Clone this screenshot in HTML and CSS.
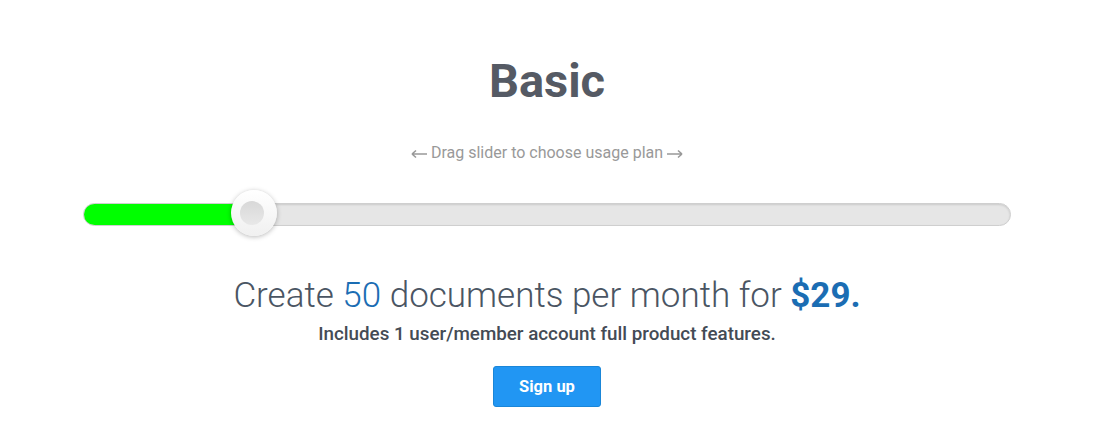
FILE: index.html
```html
<!DOCTYPE html>
<html lang="en">
<head>
    <meta charset="UTF-8">
    <title>Usage Plan</title>
    <link rel="stylesheet" href="styles.css">
</head>
<body>

<div class="plan">
    <h1 class="plan-name">Basic</h1>
    <p class="hint">
        <svg class="arrow" width="16" height="10" viewBox="0 0 16 10"><path d="M1 5H16M1 5L5 1.5M1 5L5 8.5" fill="none" stroke="#999" stroke-width="1.6"/></svg>
        Drag slider to choose usage plan
        <svg class="arrow" width="16" height="10" viewBox="0 0 16 10"><path d="M0 5H15M15 5L11 1.5M15 5L11 8.5" fill="none" stroke="#999" stroke-width="1.6"/></svg>
    </p>

    <div class="slider">
        <div class="slider-track">
            <div class="slider-fill"></div>
        </div>
        <div class="slider-thumb"><span class="thumb-dot"></span></div>
    </div>

    <p class="headline">Create <span class="count">50</span> documents per month for <strong class="price">$29.</strong></p>
    <p class="details">Includes 1 user/member account full product features.</p>

    <button class="signup">Sign up</button>
</div>

</body>
</html>
```

FILE: styles.css
```css
body {
    margin: 0;
    font-family: Roboto, 'Liberation Sans', sans-serif;
    background-color: #fff;
}
.plan {
    display: flex;
    flex-direction: column;
    align-items: center;
    padding-top: 52px;
    padding-right: 14px;
}
.plan-name {
    margin: 0;
    font-size: 47px;
    font-weight: 700;
    color: #555a64;
    line-height: 58px;
}
.hint {
    display: flex;
    align-items: center;
    gap: 4px;
    margin: 33px 0 0;
    font-size: 16px;
    color: #999;
    line-height: 20px;
}
.arrow {
    margin-top: 1px;
}
.slider {
    position: relative;
    width: 928px;
    height: 48px;
    margin-top: 27px;
    display: flex;
    align-items: center;
}
.slider-track {
    width: 100%;
    height: 23px;
    border-radius: 12px;
    background-color: #e6e6e6;
    border: 1px solid #cfcfcf;
    box-sizing: border-box;
    box-shadow: inset 0 1px 2px rgba(0, 0, 0, 0.12);
    overflow: hidden;
}
.slider-fill {
    width: 170px;
    height: 100%;
    background-color: #00ff00;
}
.slider-thumb {
    position: absolute;
    left: 148px;
    top: 0;
    width: 46px;
    height: 46px;
    border-radius: 50%;
    background: linear-gradient(#ffffff, #f0f0f0);
    box-shadow: 0 1px 5px rgba(0, 0, 0, 0.28);
    display: flex;
    justify-content: center;
    align-items: center;
}
.thumb-dot {
    width: 24px;
    height: 24px;
    margin-left: -4px;
    border-radius: 50%;
    background: linear-gradient(#d8d8d8, #e8e8e8);
}
.headline {
    margin: 37px 0 0;
    font-size: 35px;
    font-weight: 300;
    color: #4a5563;
    line-height: 42px;
}
.count {
    color: #1b6db3;
}
.price {
    font-weight: 700;
    color: #1b6db3;
}
.details {
    margin: 5px 0 0;
    font-size: 18.8px;
    font-weight: 500;
    color: #444b55;
    line-height: 24px;
}
.signup {
    margin-top: 20px;
    width: 108px;
    height: 41px;
    border: 1px solid #1a86d8;
    border-radius: 3px;
    background-color: #2196f3;
    color: #fff;
    font-family: Roboto, 'Liberation Sans', sans-serif;
    font-size: 16.5px;
    font-weight: 700;
    cursor: pointer;
}
```
